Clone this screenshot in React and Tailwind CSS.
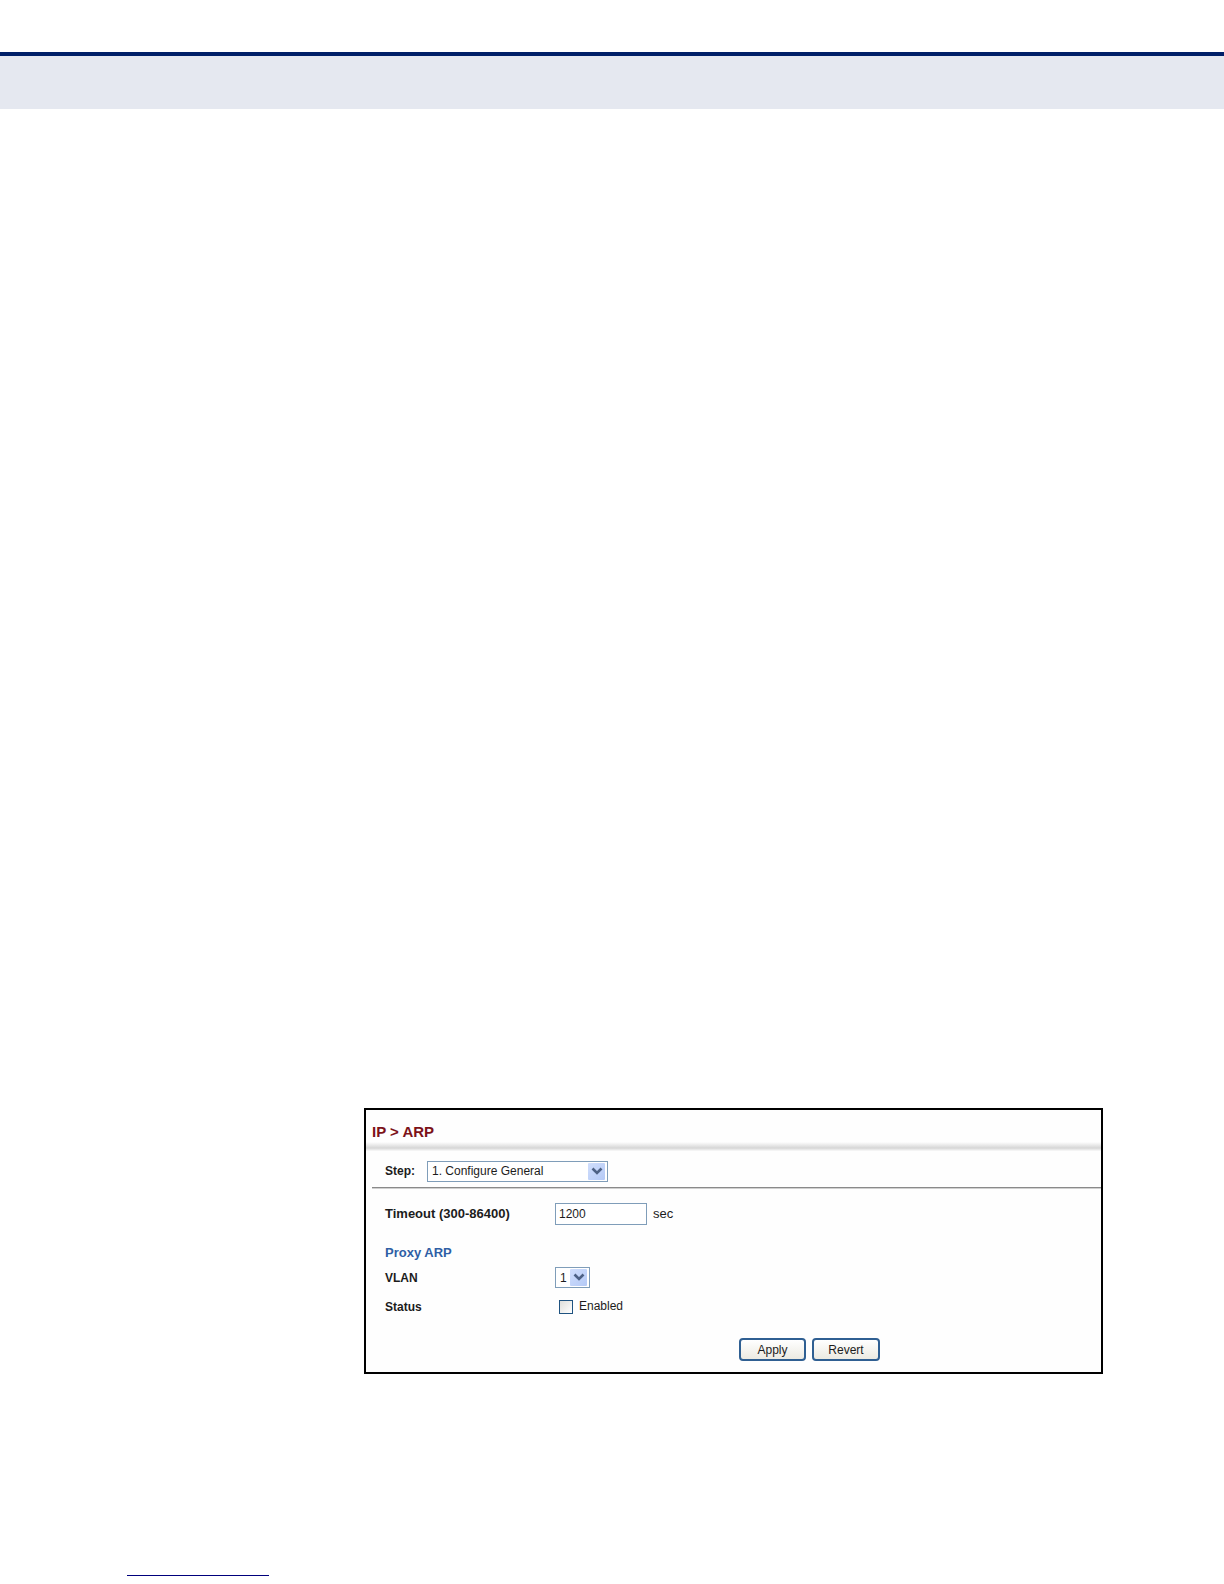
function SelectBox({ id, options, className }) {
  return (
    <div className={`relative h-[21px] ${className}`}>
      <select
        id={id}
        className="block h-full w-full appearance-none border border-[#7f9db9] bg-white pl-1 text-[12px] leading-4 text-[#1c1c1c] outline-none"
      >
        {options.map((option) => (
          <option key={option}>{option}</option>
        ))}
      </select>
      <span className="pointer-events-none absolute inset-y-[2px] right-[3px] flex w-[17px] items-center justify-center rounded-[1px] bg-linear-to-br from-[#d0defc] to-[#b4c9f6]">
        <svg width="12" height="9" viewBox="0 0 12 9" fill="none" aria-hidden="true">
          <path d="M1.5 1.5 6 6 10.5 1.5" stroke="#4d6185" strokeWidth="2.6" />
        </svg>
      </span>
    </div>
  );
}

function ActionButton({ type, children, className }) {
  return (
    <button
      type={type}
      className={`h-[23px] rounded-[4px] border-2 border-[#2f5f92] bg-linear-to-b from-white to-[#eceae2] text-[12px] leading-4 text-[#1c1c1c] ${className}`}
    >
      {children}
    </button>
  );
}

export default function App() {
  return (
    <div className="flex min-h-screen flex-col bg-white font-['Liberation_Sans',Arial,sans-serif] text-[#1c1c1c]">
      <header className="mt-[52px] h-[57px] border-t-4 border-[#001f68] bg-[#e5e8f0]" />

      <main className="mt-[999px] mr-[121px] ml-[364px]">
        <form className="border-2 border-black bg-[#fefefe] pb-[11px]" onSubmit={(e) => e.preventDefault()}>
          <h1 className="pt-[13px] pl-[6px] text-[15px] leading-[18px] font-bold text-[#7c1219]">IP &gt; ARP</h1>
          <div className="mt-px flex h-[9px] flex-col" aria-hidden="true">
            <div className="h-[6px] bg-linear-to-b from-[#fefefe] to-[#d6d6d6]" />
            <div className="h-[3px] bg-linear-to-b from-[#d6d6d6] to-[#fafafa]" />
          </div>

          <div className="ml-[6px] flex h-[37px] items-center border-b border-[#8a8a8a] pt-[5px] pb-[1px] pl-[13px] shadow-[0_1px_0_#d0d0d0]">
            <label htmlFor="step" className="w-[42px] text-[12px] leading-4 font-bold">
              Step:
            </label>
            <SelectBox id="step" options={["1. Configure General"]} className="w-[181px]" />
          </div>

          <div className="mt-[15px] flex h-[22px] items-center pl-[19px]">
            <label htmlFor="timeout" className="w-[170px] text-[13px] leading-4 font-bold">
              Timeout (300-86400)
            </label>
            <input
              id="timeout"
              type="text"
              defaultValue="1200"
              className="h-full w-[92px] border border-[#7f9db9] bg-white px-[3px] text-[12px] leading-4 outline-none"
            />
            <span className="ml-[6px] text-[13px] leading-4">sec</span>
          </div>

          <h2 className="mt-[18px] pl-[19px] text-[13px] leading-5 font-bold text-[#2f5fa5]">Proxy ARP</h2>

          <div className="mt-1 flex h-[21px] items-center pl-[19px]">
            <label htmlFor="vlan" className="w-[170px] text-[12px] leading-4 font-bold">
              VLAN
            </label>
            <SelectBox id="vlan" options={["1"]} className="w-[35px]" />
          </div>

          <div className="mt-[11px] flex h-4 items-center pl-[19px]">
            <span id="status-label" className="w-[174px] text-[12px] leading-4 font-bold">
              Status
            </span>
            <input
              id="enabled"
              type="checkbox"
              aria-describedby="status-label"
              className="size-[14px] appearance-none border border-[#1f5380] bg-linear-to-br from-[#dededa] to-white checked:bg-[#2f5f92]"
            />
            <label htmlFor="enabled" className="ml-[6px] pb-[2px] text-[12px] leading-4">
              Enabled
            </label>
          </div>

          <div className="mt-[23px] flex justify-end gap-[6px] pr-[221px]">
            <ActionButton type="submit" className="w-[67px]">
              Apply
            </ActionButton>
            <ActionButton type="reset" className="w-[68px]">
              Revert
            </ActionButton>
          </div>
        </form>
      </main>

      <footer className="mt-auto pb-2 pl-[127px]">
        <hr className="w-[142px] border-t border-[#00007c]" />
      </footer>
    </div>
  );
}
